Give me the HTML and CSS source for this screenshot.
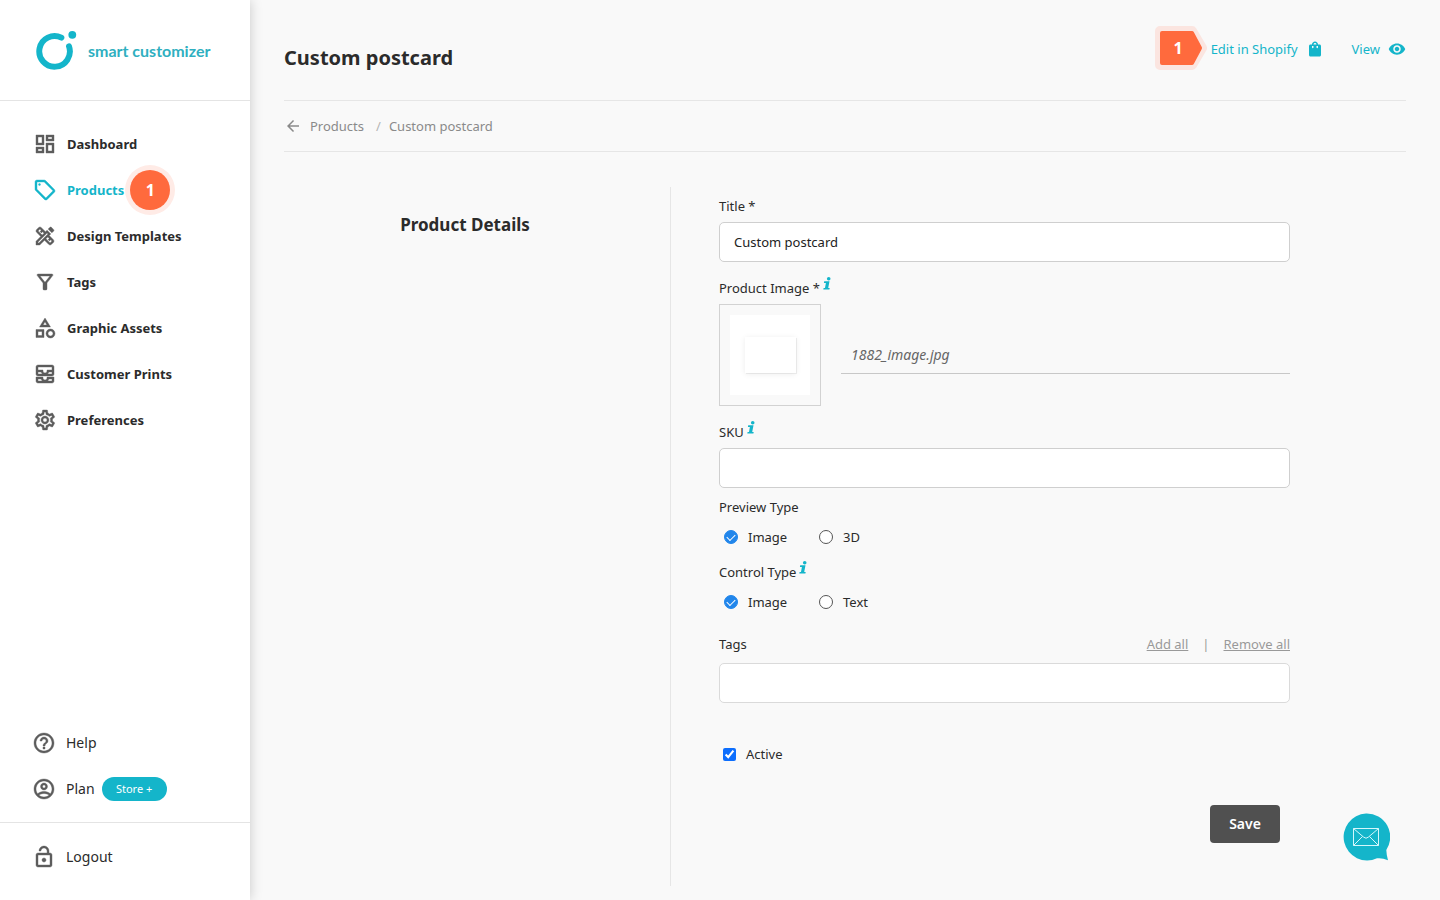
FILE: index.html
```html
<!DOCTYPE html>
<html lang="en">
<head>
<meta charset="utf-8">
<title>Custom postcard – Smart Customizer</title>
<link rel="stylesheet" href="styles.css">
</head>
<body>
<div class="app">
  <aside class="sidebar">
    <a class="brand" href="#">
      <svg class="brand-mark" width="42" height="42" viewBox="0 0 42 42" aria-hidden="true">
        <path d="M25.400 8.700A15.300 15.300 0 1 0 33 17.300" fill="none" stroke="#14b5ca" stroke-width="5.900" stroke-linecap="round"/>
        <circle cx="36.300" cy="5.800" r="3.900" fill="#14b5ca"/>
      </svg>
      <span class="brand-name">smart customizer</span>
    </a>
    <nav class="nav" aria-label="Main">
      <a class="nav-item" href="#"><svg class="icon" viewBox="0 0 24 24"><path d="M19 5v2h-4V5h4M9 5v6H5V5h4m10 8v6h-4v-6h4M9 17v2H5v-2h4M21 3h-8v6h8V3zM11 3H3v10h8V3zm10 8h-8v10h8V11zm-10 4H3v6h8v-6z"/></svg>Dashboard</a>
      <a class="nav-item nav-item-active" href="#"><svg class="icon" viewBox="0 0 24 24"><path d="M21.410 11.410l-8.830-8.830c-.37-.37-.88-.58-1.410-.58H4c-1.100 0-2 .9-2 2v7.170c0 .53.21 1.040.59 1.410l8.830 8.830c.78.78 2.050.78 2.830 0l7.170-7.170c.78-.78.78-2.040-.01-2.830zM12.830 20L4 11.170V4h7.170L20 12.830 12.830 20z"/><circle cx="6.500" cy="6.500" r="1"/></svg>Products<span class="step-dot">1</span></a>
      <a class="nav-item" href="#"><svg class="icon" viewBox="0 0 24 24"><path d="M16.240 11.510l1.570-1.570-3.750-3.750-1.570 1.570-4.140-4.130c-.78-.78-2.050-.78-2.830 0l-1.900 1.900c-.78.78-.78 2.050 0 2.830l4.130 4.130L3 17.250V21h3.750l4.760-4.760 4.130 4.130c.95.95 2.230.6 2.830 0l1.900-1.900c.78-.78.78-2.050 0-2.830l-4.130-4.130zm-7.060-.44L5.040 6.940l1.890-1.900L8.200 6.310 7.020 7.500l1.410 1.410 1.190-1.190 1.450 1.450-1.890 1.900zm7.880 7.890l-4.130-4.130 1.900-1.900 1.450 1.450-1.190 1.190 1.410 1.410 1.190-1.190 1.270 1.270-1.900 1.900zM5.920 19H5v-.92l9.060-9.060.92.92L5.920 19zM20.710 7.040c.39-.39.39-1.020 0-1.410l-2.340-2.340c-.47-.47-1.120-.29-1.410 0l-1.830 1.830 3.750 3.750 1.830-1.830z"/></svg>Design Templates</a>
      <a class="nav-item" href="#"><svg class="icon" viewBox="0 0 24 24"><path d="M7 6h10l-5.010 6.300L7 6zm-2.750-.39C6.270 8.200 10 13 10 13v6c0 .55.45 1 1 1h2c.55 0 1-.45 1-1v-6s3.720-4.800 5.740-7.390c.51-.66.04-1.610-.79-1.610H5.040c-.83 0-1.300.95-.79 1.610z"/></svg>Tags</a>
      <a class="nav-item" href="#"><svg class="icon" viewBox="0 0 24 24"><path d="M12 2l-5.500 9h11L12 2zm0 3.840L13.930 9h-3.870L12 5.840zM17.500 13c-2.490 0-4.500 2.010-4.500 4.500s2.010 4.500 4.500 4.500 4.500-2.010 4.500-4.500-2.010-4.500-4.500-4.500zm0 7c-1.380 0-2.500-1.120-2.500-2.500s1.120-2.500 2.500-2.500 2.500 1.120 2.500 2.500-1.120 2.500-2.500 2.500zM3 21.500h8v-8H3v8zm2-6h4v4H5v-4z"/></svg>Graphic Assets</a>
      <a class="nav-item" href="#"><svg class="icon" viewBox="0 0 24 24"><path d="M19 3H5c-1.100 0-2 .9-2 2v7c0 1.100.9 2 2 2h14c1.100 0 2-.9 2-2V5c0-1.100-.9-2-2-2zM5 10h3.130c.21.78.67 1.470 1.270 2H5v-2zm14 2h-4.400c.6-.53 1.060-1.220 1.270-2H19v2zm0-4h-5v1c0 1.070-.93 2-2 2s-2-.93-2-2V8H5V5h14v3zm-5 7v1c0 .47-.19.9-.48 1.250-.37.45-.92.75-1.520.75s-1.150-.3-1.520-.75c-.29-.35-.48-.78-.48-1.250v-1H3v4c0 1.100.9 2 2 2h14c1.100 0 2-.9 2-2v-4h-7zm-9 2h3.130c.02.09.06.17.09.25.24.68.65 1.280 1.180 1.750H5v-2zm14 2h-4.400c.54-.47.95-1.070 1.180-1.750.03-.08.07-.16.09-.25H19v2z"/></svg>Customer Prints</a>
      <a class="nav-item" href="#"><svg class="icon" viewBox="0 0 24 24"><path d="M19.430 12.980c.04-.32.07-.64.07-.98 0-.34-.03-.66-.07-.98l2.110-1.650c.19-.15.24-.42.12-.64l-2-3.460c-.09-.16-.26-.25-.44-.25-.06 0-.12.01-.17.03l-2.490 1c-.52-.4-1.080-.73-1.690-.98l-.38-2.650C14.460 2.180 14.250 2 14 2h-4c-.25 0-.46.18-.49.42l-.38 2.650c-.61.25-1.170.59-1.690.98l-2.490-1c-.06-.02-.12-.03-.18-.03-.17 0-.34.09-.43.25l-2 3.460c-.13.22-.07.49.12.64l2.110 1.650c-.04.32-.07.65-.07.98 0 .33.03.66.07.98l-2.110 1.650c-.19.15-.24.42-.12.64l2 3.460c.09.16.26.25.44.25.06 0 .12-.01.17-.03l2.490-1c.52.4 1.080.73 1.690.98l.38 2.650c.03.24.24.42.49.42h4c.25 0 .46-.18.49-.42l.38-2.650c.61-.25 1.170-.59 1.690-.98l2.490 1c.06.02.12.03.18.03.17 0 .34-.09.43-.25l2-3.460c.12-.22.07-.49-.12-.64l-2.110-1.650zm-1.980-1.710c.04.31.05.52.05.73 0 .21-.02.43-.05.73l-.14 1.130.89.7 1.080.84-.7 1.210-1.270-.51-1.040-.42-.9.68c-.43.32-.84.56-1.250.73l-1.060.43-.16 1.130-.2 1.350h-1.400l-.19-1.350-.16-1.130-1.060-.43c-.43-.18-.83-.41-1.230-.71l-.91-.7-1.060.43-1.270.51-.7-1.210 1.080-.84.89-.7-.14-1.130c-.03-.31-.05-.54-.05-.74s.02-.43.05-.73l.14-1.130-.89-.7-1.080-.84.7-1.210 1.270.51 1.040.42.9-.68c.43-.32.84-.56 1.250-.73l1.060-.43.16-1.130.2-1.350h1.390l.19 1.350.16 1.130 1.060.43c.43.18.83.41 1.230.71l.91.7 1.060-.43 1.270-.51.7 1.210-1.070.85-.89.7.14 1.130zM12 8c-2.210 0-4 1.790-4 4s1.790 4 4 4 4-1.790 4-4-1.790-4-4-4zm0 6c-1.100 0-2-.9-2-2s.9-2 2-2 2 .9 2 2-.9 2-2 2z"/></svg>Preferences</a>
    </nav>
    <div class="side-foot">
      <div class="foot-group">
        <a class="foot-item" href="#"><svg class="icon" viewBox="0 0 24 24"><path d="M11 18h2v-2h-2v2zm1-16C6.480 2 2 6.480 2 12s4.480 10 10 10 10-4.480 10-10S17.520 2 12 2zm0 18c-4.410 0-8-3.590-8-8s3.590-8 8-8 8 3.590 8 8-3.590 8-8 8zm0-14c-2.210 0-4 1.790-4 4h2c0-1.100.9-2 2-2s2 .9 2 2c0 2-3 1.750-3 5h2c0-2.250 3-2.500 3-5 0-2.210-1.790-4-4-4z"/></svg>Help</a>
        <a class="foot-item" href="#"><svg class="icon" viewBox="0 0 24 24"><path fill-rule="evenodd" d="M12 2C6.480 2 2 6.480 2 12s4.480 10 10 10 10-4.480 10-10S17.520 2 12 2zM7.070 18.280c.43-.9 3.050-1.780 4.930-1.780s4.510.88 4.930 1.780C15.570 19.360 13.860 20 12 20s-3.570-.64-4.930-1.720zm11.290-1.450c-1.430-1.740-4.900-2.330-6.360-2.330s-4.930.59-6.360 2.330C4.620 15.490 4 13.820 4 12c0-4.410 3.590-8 8-8s8 3.590 8 8c0 1.820-.62 3.490-1.640 4.830zM12 6c-1.940 0-3.500 1.560-3.500 3.500S10.060 13 12 13s3.500-1.560 3.500-3.500S13.940 6 12 6zm0 5c-.83 0-1.500-.67-1.500-1.500S11.170 8 12 8s1.500.67 1.500 1.500S12.830 11 12 11z"/></svg>Plan<span class="pill">Store +</span></a>
      </div>
      <div class="logout-group">
        <a class="foot-item" href="#"><svg class="icon" viewBox="0 0 24 24"><path d="M12 17c1.100 0 2-.9 2-2s-.9-2-2-2-2 .9-2 2 .9 2 2 2zm6-9h-1V6c0-2.760-2.240-5-5-5S7 3.240 7 6h1.900c0-1.710 1.390-3.100 3.100-3.100 1.710 0 3.100 1.390 3.100 3.100v2H6c-1.100 0-2 .9-2 2v10c0 1.100.9 2 2 2h12c1.100 0 2-.9 2-2V10c0-1.100-.9-2-2-2zm0 12H6V10h12v10z"/></svg>Logout</a>
      </div>
    </div>
  </aside>

  <main class="main">
    <header class="page-head">
      <h1 class="page-title">Custom postcard</h1>
      <div class="head-links">
        <svg class="step-arrow" width="52" height="44" viewBox="0 0 52 44" role="img" aria-label="Step 1">
          <path d="M5 5H37L47 22L37 39H5Z" fill="#fbe5e0" stroke="#fbe5e0" stroke-width="10" stroke-linejoin="round"/>
          <path d="M7 7H37L45 22L37 37H7Z" fill="#ff6a3d" stroke="#ff6a3d" stroke-width="4" stroke-linejoin="round"/>
          <text class="step-arrow-text" x="23" y="28" text-anchor="middle">1</text>
        </svg>
        <a class="head-link" href="#">Edit in Shopify<svg width="18" height="18" viewBox="0 0 24 24" fill="#14b5ca"><path fill-rule="evenodd" d="M18 6h-2c0-2.210-1.790-4-4-4S8 3.790 8 6H6c-1.100 0-2 .9-2 2v12c0 1.100.9 2 2 2h12c1.100 0 2-.9 2-2V8c0-1.100-.9-2-2-2zm-8 4c0 .55-.45 1-1 1s-1-.45-1-1V8h2v2zm0-4c0-1.100.9-2 2-2s2 .9 2 2h-4zm6 4c0 .55-.45 1-1 1s-1-.45-1-1V8h2v2z"/></svg></a>
        <a class="head-link head-view" href="#">View<svg width="18" height="18" viewBox="0 0 24 24" fill="#14b5ca"><path d="M12 4.500C7 4.500 2.730 7.610 1 12c1.730 4.390 6 7.500 11 7.500s9.270-3.110 11-7.500c-1.730-4.390-6-7.500-11-7.500zM12 17c-2.760 0-5-2.240-5-5s2.240-5 5-5 5 2.240 5 5-2.240 5-5 5zm0-8c-1.660 0-3 1.340-3 3s1.340 3 3 3 3-1.340 3-3-1.340-3-3-3z"/></svg></a>
      </div>
    </header>

    <nav class="crumbs" aria-label="Breadcrumb">
      <svg class="crumb-arrow" width="18" height="18" viewBox="0 0 24 24" fill="#8a8a8a"><path d="M20 11H7.830l5.590-5.590L12 4l-8 8 8 8 1.410-1.410L7.830 13H20v-2z"/></svg>
      <a class="crumb" href="#">Products</a>
      <span class="crumb-sep">/</span>
      <span>Custom postcard</span>
    </nav>

    <section class="details">
      <h2 class="details-title">Product Details</h2>
      <form class="form">
        <div class="field">
          <label class="label" for="title">Title *</label>
          <input class="text-input" id="title" type="text" value="Custom postcard">
        </div>
        <div class="field">
          <span class="label">Product Image *<svg class="info" viewBox="0 0 8 13"><circle cx="5.700" cy="1.800" r="1.800"/><path d="M1.200 4.300H6.500L5.200 10.900H6.700L6.400 12.600H0.300L0.600 10.900H2L2.900 6H0.900Z"/></svg></span>
          <div class="image-row">
            <div class="thumb"><div class="thumb-bg"><div class="postcard"></div></div></div>
            <div class="file-name">1882_image.jpg</div>
          </div>
        </div>
        <div class="field">
          <label class="label" for="sku">SKU<svg class="info" viewBox="0 0 8 13"><circle cx="5.700" cy="1.800" r="1.800"/><path d="M1.200 4.300H6.500L5.200 10.900H6.700L6.400 12.600H0.300L0.600 10.900H2L2.900 6H0.900Z"/></svg></label>
          <input class="text-input" id="sku" type="text">
        </div>
        <fieldset class="choices">
          <legend class="label">Preview Type</legend>
          <div class="choice-row">
            <label class="choice"><input class="radio" type="radio" name="preview" checked>Image</label>
            <label class="choice"><input class="radio" type="radio" name="preview">3D</label>
          </div>
        </fieldset>
        <fieldset class="choices choices-control">
          <legend class="label">Control Type<svg class="info" viewBox="0 0 8 13"><circle cx="5.700" cy="1.800" r="1.800"/><path d="M1.200 4.300H6.500L5.200 10.900H6.700L6.400 12.600H0.300L0.600 10.900H2L2.900 6H0.900Z"/></svg></legend>
          <div class="choice-row">
            <label class="choice"><input class="radio" type="radio" name="control" checked>Image</label>
            <label class="choice"><input class="radio" type="radio" name="control">Text</label>
          </div>
        </fieldset>
        <div class="tags">
          <div class="tags-head">
            <label for="tags">Tags</label>
            <div class="tag-links"><a class="tag-link" href="#">Add all</a><span>|</span><a class="tag-link" href="#">Remove all</a></div>
          </div>
          <input class="text-input tags-input" id="tags" type="text">
        </div>
        <label class="active-row"><input class="check" type="checkbox" checked>Active</label>
        <div class="actions"><button class="save" type="submit">Save</button></div>
      </form>
    </section>
  </main>

  <button class="chat" type="button" aria-label="Contact us">
    <svg width="48" height="48" viewBox="0 0 48 48">
      <path d="M24 .5A23.500 23.500 0 1 0 35 45.300Q40 44.600 46 47.200Q44.500 42 44.300 37A23.500 23.500 0 0 0 24 .5Z" fill="#14b5ca"/>
      <path d="M11.500 15.500H36.500V32.500H11.500ZM11.500 15.500L21.500 24Q24 26.500 26.500 24L36.500 15.500M11.500 32.500L20.500 23.500M36.500 32.500L27.500 23.500" fill="none" stroke="#d4f7fb" stroke-width="1"/>
    </svg>
  </button>
</div>
</body>
</html>
```
FILE: styles.css
```css
* {
  box-sizing: border-box;
}

body {
  margin: 0;
  background: #f9f9f9;
  color: #2b2b2b;
  font: 13px/20px "Noto Sans", "Open Sans", sans-serif;
}

a {
  color: inherit;
  text-decoration: none;
}

input,
button {
  margin: 0;
  font: inherit;
}

.app {
  display: flex;
  min-height: 100vh;
}

/* Sidebar */
.sidebar {
  display: flex;
  flex: none;
  flex-direction: column;
  width: 250px;
  background: #fff;
  box-shadow: 0 0 12px rgba(0, 0, 0, 0.2);
}

.brand {
  display: flex;
  align-items: center;
  gap: 10px;
  height: 101px;
  padding-left: 36px;
  border-bottom: 1px solid #e4e4e4;
  color: #2fafc0;
}

.brand-mark {
  flex: none;
}

.brand-name {
  padding-top: 2px;
  font: 700 16px/24px Lato, sans-serif;
  white-space: nowrap;
}

.nav {
  display: flex;
  flex-direction: column;
  padding-top: 20px;
}

.nav-item,
.foot-item {
  display: flex;
  align-items: center;
  gap: 10px;
  height: 46px;
}

.nav-item {
  padding-left: 33px;
  font-weight: 700;
}

.icon {
  flex: none;
  width: 24px;
  height: 24px;
  fill: #5c5c5c;
  stroke: #5c5c5c;
  stroke-width: 0.4;
}

.nav-item-active {
  color: #14b5ca;
}

.nav-item-active .icon {
  fill: #14b5ca;
  stroke: #14b5ca;
}

.step-dot {
  width: 40px;
  height: 40px;
  margin-left: -4px;
  border-radius: 50%;
  background: #ff6a3d;
  box-shadow: 0 0 0 5px #ffebe6;
  color: #fff;
  font-size: 16px;
  line-height: 40px;
  text-align: center;
}

.side-foot {
  margin-top: auto;
}

.foot-group {
  padding-bottom: 10px;
  border-bottom: 1px solid #e4e4e4;
}

.foot-item {
  padding-left: 32px;
  font-size: 14px;
}

.logout-group {
  padding: 11px 0 20px;
}

.pill {
  width: 65px;
  height: 24px;
  margin-left: -3px;
  border-radius: 12px;
  background: #14b5ca;
  color: #fff;
  font-size: 11px;
  line-height: 24px;
  text-align: center;
}

/* Page header */
.main {
  flex: 1;
  min-width: 0;
  padding: 0 34px 14px;
}

.page-head {
  display: flex;
  justify-content: space-between;
  height: 101px;
  border-bottom: 1px solid #e6e6e6;
}

.page-title {
  margin: 42px 0 0;
  font-size: 20px;
  line-height: 32px;
}

.head-links {
  display: flex;
  align-items: center;
  height: 46px;
  margin-top: 26px;
  color: #14b5ca;
}

.step-arrow {
  margin-right: 4px;
  margin-bottom: 2px;
}

.step-arrow-text {
  fill: #fff;
  font-size: 16px;
  font-weight: 700;
}

.head-link {
  display: flex;
  align-items: center;
  gap: 8px;
}

.head-view {
  margin-left: 28px;
}

/* Breadcrumb */
.crumbs {
  display: flex;
  align-items: center;
  height: 51px;
  border-bottom: 1px solid #e6e6e6;
  color: #8a8a8a;
}

.crumb-arrow {
  margin-right: 8px;
}

.crumb-sep {
  margin: 0 8px 0 12px;
  color: #b5b5b5;
}

/* Product form */
.details {
  display: grid;
  grid-template-columns: 386fr 736fr;
  margin-top: 35px;
}

.details-title {
  margin: 24px 24px 0 0;
  font-size: 17px;
  line-height: 28px;
  text-align: center;
}

.form {
  padding: 9px 116px 43px 48px;
  border-left: 1px solid #e6e6e6;
}

.field {
  margin-bottom: 16px;
}

.label {
  display: flex;
  padding: 0;
  margin-bottom: 6px;
}

.info {
  width: 8px;
  height: 13px;
  margin: -1px 0 0 3px;
  fill: #14b5ca;
}

.text-input {
  display: block;
  width: 100%;
  height: 40px;
  padding: 0 14px;
  border: 1px solid #cfcfcf;
  border-radius: 5px;
  background: #fff;
  color: #222;
}

.image-row {
  display: flex;
  gap: 20px;
}

.thumb {
  flex: none;
  padding: 10px;
  border: 1px solid #d2d2d2;
}

.thumb-bg {
  display: grid;
  place-items: center;
  width: 80px;
  height: 80px;
  background: #fff;
}

.postcard {
  width: 51px;
  height: 36px;
  background: #fff;
  box-shadow: 0 1px 6px rgba(0, 0, 0, 0.08), 1px 1px 0 rgba(0, 0, 0, 0.06);
}

.file-name {
  flex: 1;
  height: 70px;
  padding: 41px 10px 0;
  border-bottom: 1px solid #c8c8c8;
  color: #666;
  font-size: 14px;
  font-style: italic;
}

.choices {
  min-width: 0;
  margin: -7px 0 15px;
  padding: 0;
  border: 0;
}

.choices-control {
  margin: 0 0 22px;
}

.choices .label {
  margin-bottom: 10px;
}

.choice-row {
  display: flex;
  padding-left: 5px;
}

.choice {
  display: flex;
  align-items: center;
  gap: 10px;
  width: 95px;
}

.radio {
  display: grid;
  flex: none;
  place-items: center;
  width: 14px;
  height: 14px;
  border: 1px solid #555;
  border-radius: 50%;
  background: #fff;
  appearance: none;
}

.radio:checked {
  border-color: #2186eb;
  background: #2186eb;
}

.radio:checked::after {
  width: 7px;
  height: 4px;
  margin-bottom: 2px;
  border-bottom: 1px solid #fff;
  border-left: 1px solid #fff;
  content: "";
  transform: rotate(-45deg);
}

.tags-head {
  display: flex;
  justify-content: space-between;
  margin-bottom: 9px;
}

.tag-links {
  display: flex;
  gap: 14px;
  color: #999;
}

.tag-link {
  text-decoration: underline;
}

.tags-input {
  border-color: #dadada;
}

.active-row {
  display: flex;
  align-items: center;
  gap: 10px;
  width: max-content;
  margin-top: 41px;
  padding-left: 4px;
}

.check {
  width: 13px;
  height: 13px;
  accent-color: #0d6efd;
}

.actions {
  display: flex;
  justify-content: flex-end;
  margin-top: 41px;
  padding-right: 10px;
}

.save {
  width: 70px;
  height: 38px;
  padding: 0;
  border: 0;
  border-radius: 4px;
  background: #505050;
  color: #fff;
  font-size: 14px;
  font-weight: 600;
}

.chat {
  position: fixed;
  right: 50px;
  bottom: 39px;
  width: 48px;
  height: 48px;
  padding: 0;
  border: 0;
  background: none;
}
```
